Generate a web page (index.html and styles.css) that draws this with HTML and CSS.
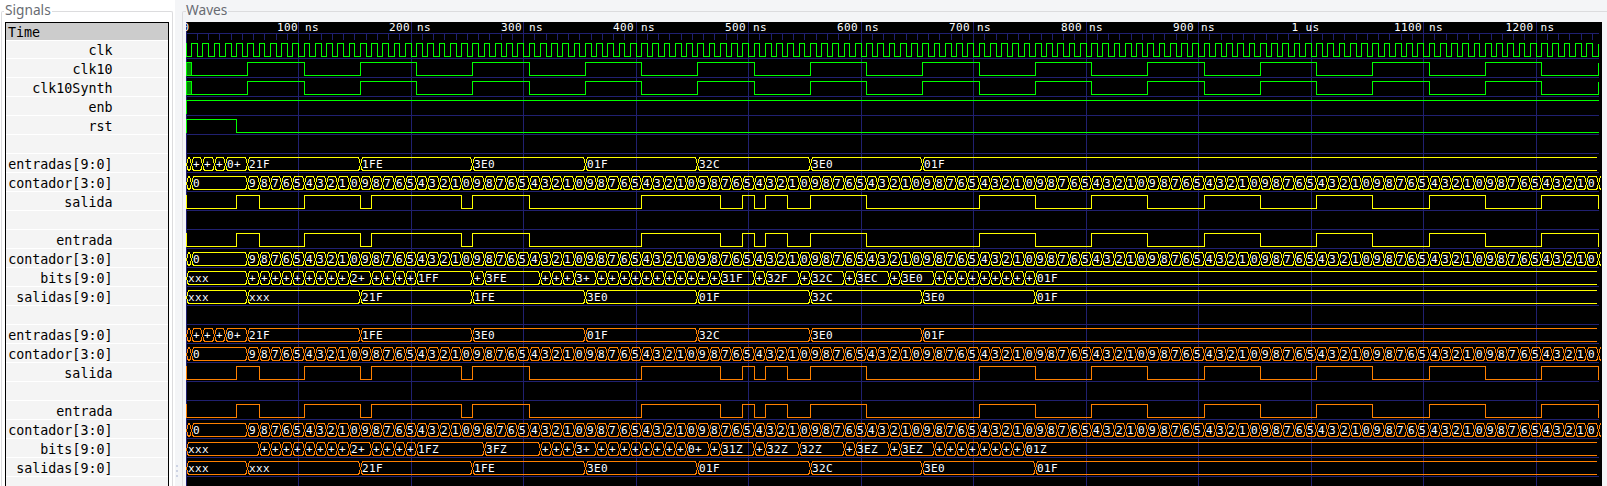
FILE: index.html
```html
<!DOCTYPE html>
<html lang="es">
<head>
<meta charset="utf-8">
<title>Waves</title>
<link rel="stylesheet" href="styles.css">
</head>
<body>
<div class="app">
  <section class="signals">
    <fieldset class="frame frame-signals">
      <legend class="legend">Signals</legend>
      <div class="list" id="list"><div class="row row-time">Time</div></div>
    </fieldset>
  </section>
  <div class="handle"><i></i><i></i><i></i></div>
  <section class="waves">
    <fieldset class="frame frame-waves">
      <legend class="legend">Waves</legend>
      <svg class="canvas" id="canvas" width="1416" height="464" viewBox="186 22 1416 464"></svg>
    </fieldset>
  </section>
</div>
<script src="waves.js"></script>
</body>
</html>
```
FILE: styles.css
```css
* { box-sizing: border-box; }
body { margin: 0; background: #f4f5f7; overflow: hidden; }
.app { display: flex; width: 1607px; height: 486px; overflow: hidden; }
.signals { width: 175px; height: 486px; padding-left: 1px; background: #fff; flex: none; overflow: hidden; }
.frame { margin: 0; min-width: 0; border: 1px solid #dcdcde; border-bottom: 0; padding: 0; height: 490px; }
.frame-signals { width: 172px; padding-left: 3px; border-radius: 2px 2px 0 0; }
.frame-waves { width: 1430px; padding-left: 3px; border-radius: 2px 0 0 0; }
.legend {
  margin-left: 0; padding: 0 1px; height: 22px;
  font: 13.7px/20px "Noto Sans", sans-serif; color: #686b72;
}
.frame-waves .legend { padding-left: 0; }
.list { width: 164px; height: 470px; border: 1px solid #000; border-bottom: 0; background: #f4f4f4; }
.frame-signals .legend { margin-left: -1px; }
.row {
  height: 19px; border-bottom: 1px solid #fff; padding-right: 55.5px;
  font: 13.33px/21px "DejaVu Sans Mono", monospace;
  color: #000; text-align: right; white-space: pre;
}
.row-time { height: 18px; line-height: 19px; background: #ccc; text-align: left; padding: 0 0 0 2px; }
.row-first { height: 18px; line-height: 19px; }
.handle { width: 7px; flex: none; display: flex; flex-direction: column; gap: 3px; padding: 465px 0 0 1px; }
.handle i { width: 2px; height: 2px; background: #cdd3e3; }
.waves { flex: 1; height: 486px; overflow: hidden; }
.canvas { display: block; background: #000; overflow: hidden; }
.canvas path { fill: none; stroke-width: 1; shape-rendering: crispEdges; }
.canvas text { font: 11px "DejaVu Sans Mono", monospace; letter-spacing: .38px; fill: #fff; white-space: pre; }
.grid { stroke: #202070; }
.green { stroke: #00ff00; }
.yellow { stroke: #ffff00; }
.orange { stroke: #ff8000; }
.unknown { fill: #008000; }
```
FILE: waves.js
```javascript
const END = 1255;
// time in ns to canvas x
const X = t => t >= END ? 1598 : Math.floor(186 + 1.125 * t);

const steps = (from, to, by) => {
  const out = [];
  for (let t = from; t <= to; t += by) out.push(t);
  return out;
};
const plus = (from, to) => steps(from, to, 10).map(t => [t, '+']);

const serial = [45, 65, 105, 155, 165, 245, 255, 305, 405, 475, 495, 505, 515, 535,
  555, 605, 705, 755, 805, 855, 905, 955, 1005, 1055, 1105, 1155, 1205, 1255];
const parallel = [[0, ''], ...plus(5, 25), [35, '0+'], [55, '21F'], [155, '1FE'], [255, '3E0'],
  [355, '01F'], [455, '32C'], [555, '3E0'], [655, '01F']];
const counter = [[0, ''], [5, '0'],
  ...steps(55, 1245, 10).map((t, i) => [t, String(9 - i % 10)]), [1255, '']];
const outputs = [[0, 'xxx'], [55, 'xxx'], [155, '21F'], [255, '1FE'], [355, '3E0'],
  [455, '01F'], [555, '32C'], [655, '3E0'], [755, '01F']];
const bits = [[0, 'xxx'], ...plus(55, 135), [145, '2+'], ...plus(165, 195), [205, '1FF'],
  [255, '+'], [265, '3FE'], ...plus(315, 335), [345, '3+'], ...plus(365, 465), [475, '31F'],
  [505, '+'], [515, '32F'], [545, '+'], [555, '32C'], [585, '+'], [595, '3EC'],
  [625, '+'], [635, '3E0'], ...plus(665, 745), [755, '01F']];
const bitsSynth = [[0, 'xxx'], ...plus(65, 135), [145, '2+'], ...plus(165, 195), [205, '1FZ'],
  [265, '3FZ'], ...plus(315, 335), [345, '3+'], ...plus(365, 435), [445, '0+'], [465, '+'],
  [475, '31Z'], [505, '+'], [515, '32Z'], [545, '32Z'], [585, '+'], [595, '3EZ'],
  [625, '+'], [635, '3EZ'], ...plus(665, 735), [745, '01Z']];

const group = (color, b) => [
  { name: 'entradas[9:0]', color, bus: parallel },
  { name: 'contador[3:0]', color, bus: counter },
  { name: 'salida', color, level: 0, edges: serial },
  { name: '' },
  { name: 'entrada', color, level: 0, edges: serial },
  { name: 'contador[3:0]', color, bus: counter },
  { name: 'bits[9:0]', color, bus: b },
  { name: 'salidas[9:0]', color, bus: outputs },
];
const slow = steps(55, 1255, 50);
const rows = [
  { name: 'clk', color: 'green', level: 0, edges: steps(5, 1255, 5) },
  { name: 'clk10', color: 'green', level: 0, edges: slow, unknown: true },
  { name: 'clk10Synth', color: 'green', level: 0, edges: slow, unknown: true },
  { name: 'enb', color: 'green', level: 1, edges: [] },
  { name: 'rst', color: 'green', level: 1, edges: [45] },
  { name: '' },
  ...group('yellow', bits),
  { name: '' },
  ...group('orange', bitsSynth),
];

let svg = '';
const path = (cls, d) => { svg += `<path class="${cls}" d="${d}"/>`; };
const text = (x, y, s) => { svg += `<text x="${x}" y="${y}">${s}</text>`; };

// time grid
let grid = 'M186 33.5H1599';
for (let t = 0; t <= 1250; t += 10) {
  grid += `M${X(t) + .5} ${t % 100 ? '34V40' : '22V486'}`;
}
rows.forEach((r, i) => { grid += `M186 ${58.5 + 19 * i}H1599`; });
path('grid', grid);

const labelX = [182.5, 277, 389, 501, 613, 725, 837, 949, 1061, 1173, 1291.5, 1394, 1505.5];
labelX.forEach((x, i) => text(x, 31, i === 0 ? '0' : i === 10 ? '1 us' : i * 100 + ' ns'));

rows.forEach((r, i) => {
  const top = 43.5 + 19 * i, bottom = top + 13;
  if (r.edges) {
    let level = r.level;
    const y = () => level ? top : bottom;
    let d = `M186.5 ${top - .5}V${bottom + .5}M186 ${y()}`;
    if (r.unknown) {
      svg += `<rect class="unknown" x="186" y="${top}" width="5" height="13"/>`;
      d += `M186 ${top}H191.5V${bottom}M186 ${bottom}`;
    }
    r.edges.forEach(t => {
      d += `H${X(t) + .5}`;
      level = 1 - level;
      d += `V${y()}`;
    });
    if (r.edges[r.edges.length - 1] !== END) d += 'H1599';
    path(r.color, d);
  }
  if (r.bus) {
    let d = '';
    r.bus.forEach(([t, label], k) => {
      const x = X(t);
      // crossing drawn as stepped pixel runs
      const mid = top + 6.5;
      const runs = s => `M${x + .5 + s * 2} ${top - .5}v2M${x + .5 + s} ${top + 1.5}v4M${x + .5} ${mid - 1.5}v3M${x + .5 + s} ${mid + 2}v3.5M${x + .5 + s * 2} ${bottom - 1.5}v2`;
      d += runs(1);
      if (k) d += runs(-1);
      if (t < END) {
        const next = r.bus[k + 1];
        const x2 = next ? X(next[0]) - 1 : 1597;
        d += `M${x + 2} ${top}H${x2}M${x + 2} ${bottom}H${x2}`;
      }
    });
    path(r.color, d);
    r.bus.forEach(([t, label]) => { if (label) text(X(t) + 2, top + 10.5, label); });
  }
});
document.getElementById('canvas').innerHTML = svg;

const list = document.getElementById('list');
rows.forEach((r, i) => {
  const el = document.createElement('div');
  el.className = i ? 'row' : 'row row-first';
  el.textContent = r.name;
  list.appendChild(el);
});
```
